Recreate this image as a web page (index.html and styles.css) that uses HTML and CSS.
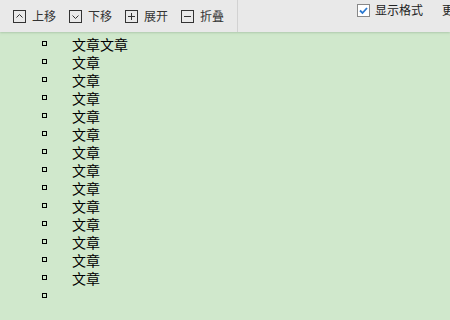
FILE: index.html
```html
<!DOCTYPE html>
<html>
<head>
<meta charset="utf-8">
<link rel="stylesheet" href="styles.css">
</head>
<body>
<div class="toolbar">
  <div class="group">
    <span class="btn"><svg class="ico" width="13" height="13" viewBox="0 0 13 13"><rect x="0.5" y="0.5" width="12" height="12" fill="none" stroke="#333"/><path d="M3.5 7.5 L6.5 4.5 L9.5 7.5" fill="none" stroke="#333"/></svg>上移</span>
    <span class="btn"><svg class="ico" width="13" height="13" viewBox="0 0 13 13"><rect x="0.5" y="0.5" width="12" height="12" fill="none" stroke="#333"/><path d="M3.5 5.5 L6.5 8.5 L9.5 5.5" fill="none" stroke="#333"/></svg>下移</span>
    <span class="btn"><svg class="ico" width="13" height="13" viewBox="0 0 13 13"><rect x="0.5" y="0.5" width="12" height="12" fill="none" stroke="#333"/><path d="M3 6.5 H10 M6.5 3 V10" fill="none" stroke="#333"/></svg>展开</span>
    <span class="btn"><svg class="ico" width="13" height="13" viewBox="0 0 13 13"><rect x="0.5" y="0.5" width="12" height="12" fill="none" stroke="#333"/><path d="M3 6.5 H10" fill="none" stroke="#333"/></svg>折叠</span>
  </div>
  <div class="divider"></div>
  <div class="right">
    <label class="check"><span class="box"><svg width="11" height="11" viewBox="0 0 11 11"><path d="M2 5.5 L4.5 8 L9 3" fill="none" stroke="#2a78d0" stroke-width="1.8"/></svg></span>显示格式</label>
    <span class="more">更</span>
  </div>
</div>
<ul class="list">
  <li>文章文章</li>
  <li>文章</li>
  <li>文章</li>
  <li>文章</li>
  <li>文章</li>
  <li>文章</li>
  <li>文章</li>
  <li>文章</li>
  <li>文章</li>
  <li>文章</li>
  <li>文章</li>
  <li>文章</li>
  <li>文章</li>
  <li>文章</li>
  <li></li>
</ul>
</body>
</html>
```
FILE: styles.css
```css
html, body {
  margin: 0;
  padding: 0;
  height: 100%;
}
body {
  background: #d0e8cc;
  font-family: "Noto Sans CJK SC", "Liberation Sans", sans-serif;
  overflow: hidden;
}
.toolbar {
  height: 32px;
  background: #e9e9e9;
  display: flex;
  align-items: stretch;
  box-shadow: 0 1px 2px rgba(150, 180, 150, 0.6);
  position: relative;
}
.group {
  display: flex;
  align-items: center;
  padding-left: 13px;
  font-size: 12px;
  color: #333;
  white-space: nowrap;
}
.btn {
  display: flex;
  align-items: center;
  width: 56px;
  height: 14px;
  line-height: 14px;
}
.ico {
  margin-right: 6px;
  flex: none;
}
.divider {
  width: 1px;
  background: #d2d2d2;
}
.right {
  flex: 1;
  min-width: 0;
  display: flex;
  align-items: flex-start;
  padding-top: 3px;
  padding-left: 119px;
  font-size: 12px;
  color: #222;
  white-space: nowrap;
  overflow: hidden;
}
.check {
  display: flex;
  align-items: center;
  height: 14px;
  line-height: 14px;
  flex: none;
}
.box {
  width: 11px;
  height: 11px;
  border: 1px solid #888;
  background: #fff;
  display: inline-flex;
  margin-right: 5px;
}
.more {
  margin-left: 19px;
  height: 14px;
  line-height: 14px;
  flex: none;
}
.list {
  list-style: none;
  margin: 3px 0 0 0;
  padding: 0 0 0 72px;
  font-size: 14px;
  line-height: 18px;
  color: #000;
}
.list li {
  height: 18px;
  position: relative;
}
.list li::before {
  content: "";
  position: absolute;
  left: -30px;
  top: 6px;
  width: 3px;
  height: 3px;
  border: 1px solid #000;
}
```
